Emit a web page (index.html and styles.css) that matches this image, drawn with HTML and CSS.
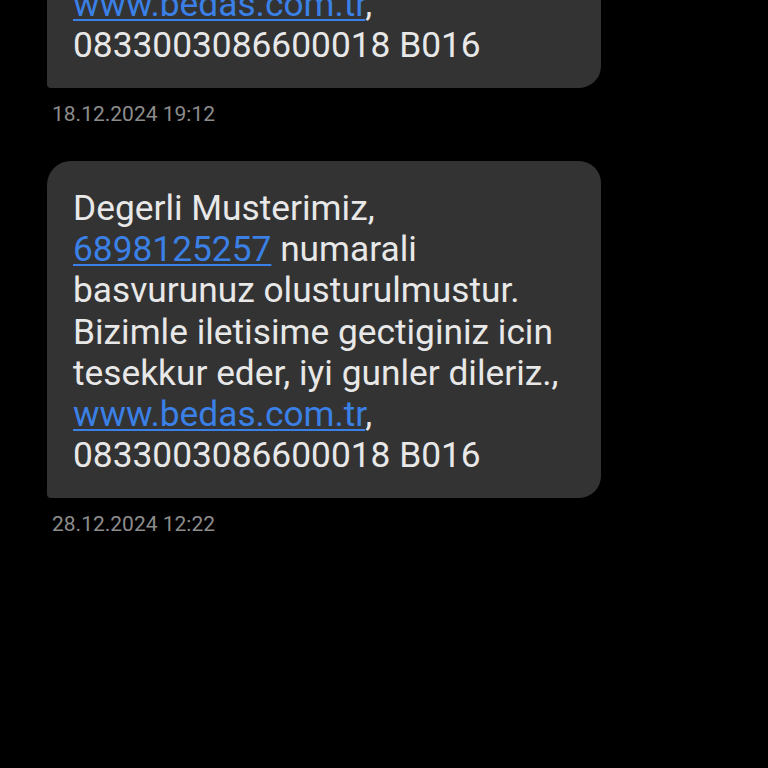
FILE: index.html
```html
<!DOCTYPE html>
<html lang="tr">
<head>
<meta charset="utf-8">
<link rel="stylesheet" href="styles.css">
</head>
<body>
<div class="thread">
  <div class="msg">
    <div class="bubble">Degerli Musterimiz,<br><a class="link" href="#">6898125257</a> numarali<br>basvurunuz olusturulmustur.<br>Bizimle iletisime gectiginiz icin<br>tesekkur eder, iyi gunler dileriz.,<br><a class="link" href="#">www.bedas.com.tr</a>,<br>0833003086600018 B016</div>
    <div class="time">18.12.2024 19:12</div>
  </div>
  <div class="msg">
    <div class="bubble">Degerli Musterimiz,<br><a class="link" href="#">6898125257</a> numarali<br>basvurunuz olusturulmustur.<br>Bizimle iletisime gectiginiz icin<br>tesekkur eder, iyi gunler dileriz.,<br><a class="link" href="#">www.bedas.com.tr</a>,<br>0833003086600018 B016</div>
    <div class="time">28.12.2024 12:22</div>
  </div>
</div>
</body>
</html>
```
FILE: styles.css
```css
html, body {
  margin: 0;
  padding: 0;
  background: #000;
  height: 100%;
  overflow: hidden;
}
body {
  font-family: Roboto, "Noto Sans", sans-serif;
}
.thread {
  display: flex;
  flex-direction: column;
  gap: 35px;
  margin-top: -249px;
  padding-left: 47px;
}
.msg {
  display: flex;
  flex-direction: column;
  gap: 14px;
}
.bubble {
  width: 554px;
  box-sizing: border-box;
  background: #333333;
  color: #e8e8e8;
  font-size: 35.3px;
  line-height: 41.2px;
  padding: 27px 20px 20px 26px;
  border-radius: 24px 22px 22px 4px;
  height: 337px;
}
.link {
  color: #3a80e6;
  text-decoration: underline;
  text-decoration-thickness: 2px;
  text-underline-offset: 3px;
}
.time {
  color: #8c8c8c;
  font-size: 21px;
  line-height: 24px;
  padding-left: 5px;
}
```
